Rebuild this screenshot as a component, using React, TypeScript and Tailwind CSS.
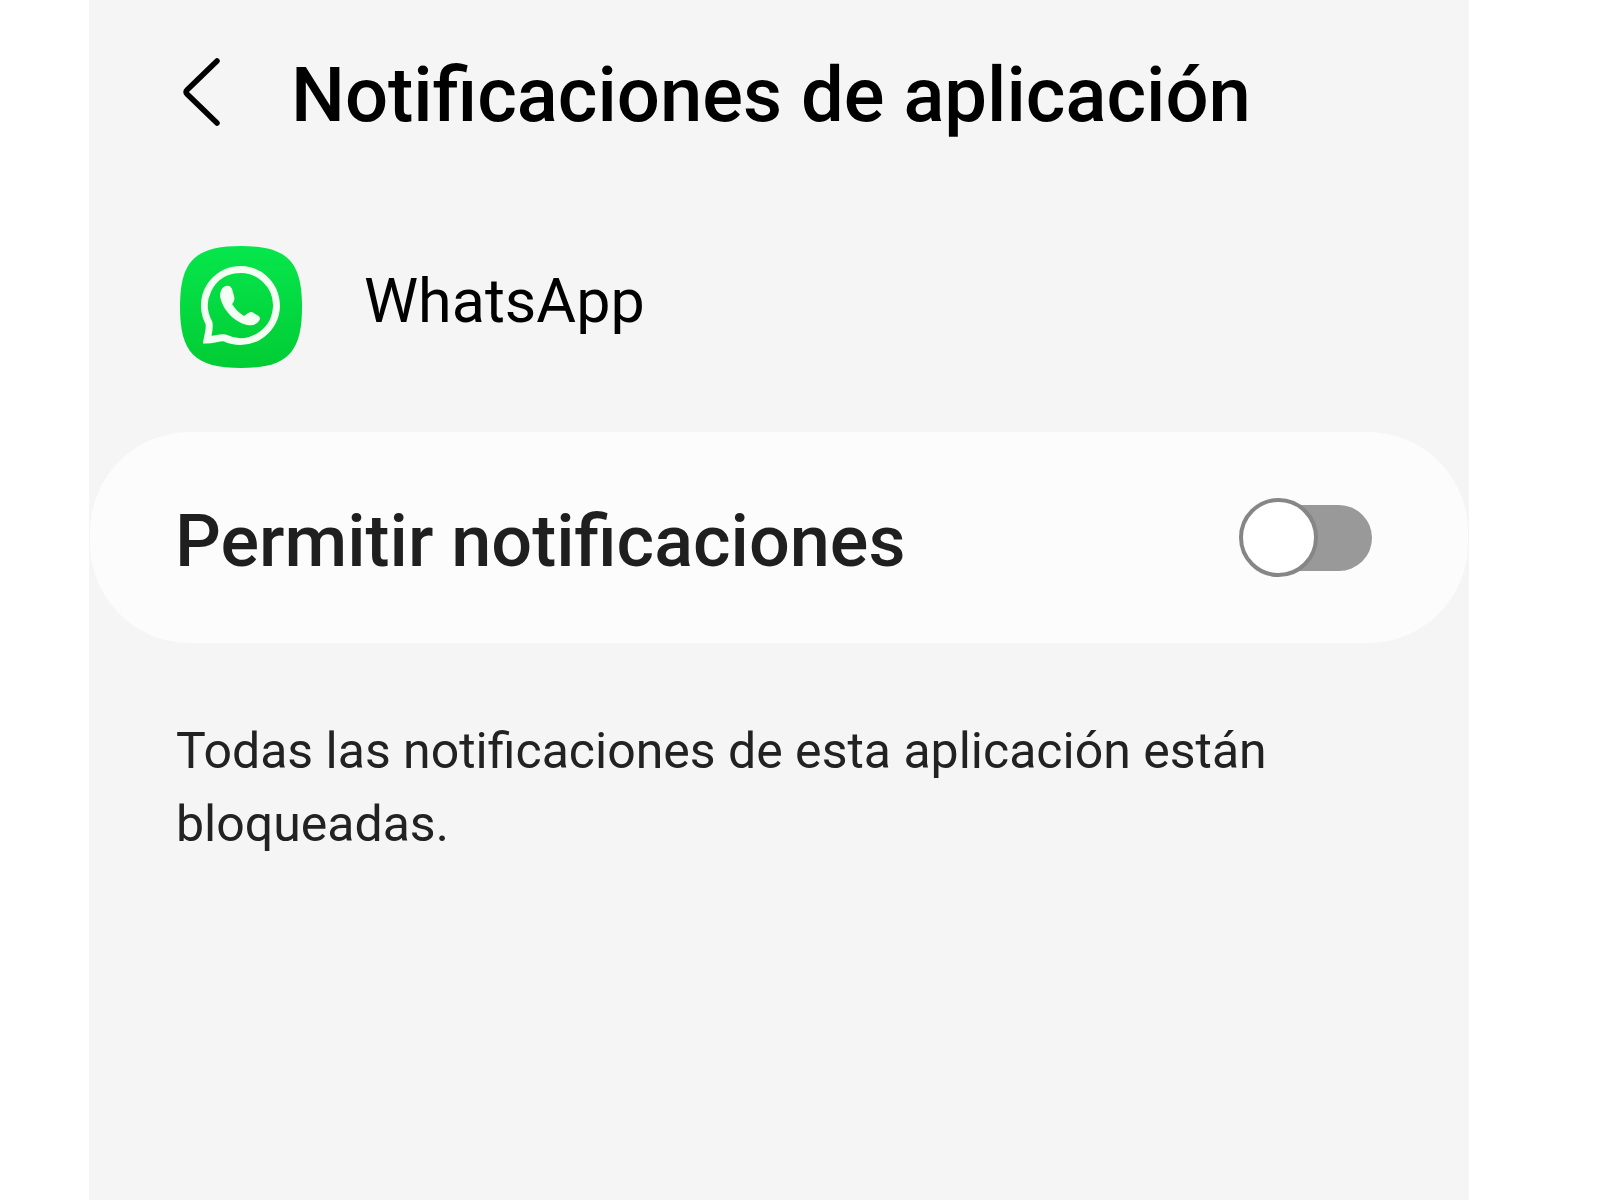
import { useState } from "react";

const WhatsAppIcon = () => (
  <svg className="size-[122px] shrink-0" viewBox="0 0 122 122" fill="none" aria-hidden="true">
    <defs>
      <linearGradient id="waGreen" x1="0" y1="0" x2="0" y2="1">
        <stop offset="0" stopColor="#06e64c" />
        <stop offset="1" stopColor="#02cc34" />
      </linearGradient>
    </defs>
    <path
      d="M61 0C107 0 122 15 122 61C122 107 107 122 61 122C15 122 0 107 0 61C0 15 15 0 61 0Z"
      fill="url(#waGreen)"
    />
    {/* speech bubble */}
    <path
      d="M27 94C28 88 30 84 29 77A36 36 0 1 1 45 92C40 91 34 94 27 94Z"
      stroke="#f4fff4"
      strokeWidth="7"
      strokeLinejoin="miter"
    />
    {/* handset */}
    <path
      d="M46 40C42 41 40 45 40 50C42 63 54 76 67 79C73 80 78 78 80 73C80 71 79 70 77 69L72 66C69 66 67 68 64 70C59 67 55 63 52 58C54 56 55 53 54 50L52 43C51 40 48 39 46 40Z"
      fill="#f4fff4"
    />
  </svg>
);

const App = () => {
  const [allowed, setAllowed] = useState(false);

  return (
    <div className="min-h-screen bg-white font-['Roboto',sans-serif]">
      <main className="ml-[89px] mr-[131px] min-h-screen bg-[#f5f5f5]">
        <header className="flex items-center pt-[51px] pl-[92px]">
          <button type="button" aria-label="Atrás" className="mr-[70px] pb-1.5">
            <svg className="h-[70px] w-10" viewBox="0 0 40 70" fill="none" stroke="#000" strokeWidth="5.5" strokeLinecap="round" strokeLinejoin="round">
              <path d="M36 4L6 33Q4 35 6 37L36 66" />
            </svg>
          </button>
          <h1 className="text-[76px] leading-[88px] font-medium text-black">
            Notificaciones de aplicación
          </h1>
        </header>

        <section className="flex items-center gap-[62px] pt-[107px] pl-[91px]">
          <WhatsAppIcon />
          <h2 className="pb-3 text-[61px] leading-[72px] text-black">WhatsApp</h2>
        </section>

        <label className="mx-px mt-16 flex h-[211px] cursor-pointer items-center justify-between rounded-[100px] bg-[#fcfcfc] pr-24 pl-[85px]">
          <span className="pt-2 text-[72px] leading-[84px] font-medium text-[#1f1f1f]">
            Permitir notificaciones
          </span>
          <span className="relative flex h-[79px] w-[133px] items-center">
            <input
              type="checkbox"
              role="switch"
              checked={allowed}
              onChange={(e) => setAllowed(e.target.checked)}
              className="peer ml-1 h-[66px] w-full appearance-none rounded-full bg-[#999999] checked:bg-[#02c832]"
            />
            <span className="absolute left-0 size-[79px] rounded-full border-4 border-[#868686] bg-white peer-checked:right-0 peer-checked:left-auto" />
          </span>
        </label>

        <p className="px-[87px] pt-[72px] text-[50px] leading-[73px] text-[#222222]">
          Todas las notificaciones de esta aplicación están bloqueadas.
        </p>
      </main>
    </div>
  );
};

export default App;
